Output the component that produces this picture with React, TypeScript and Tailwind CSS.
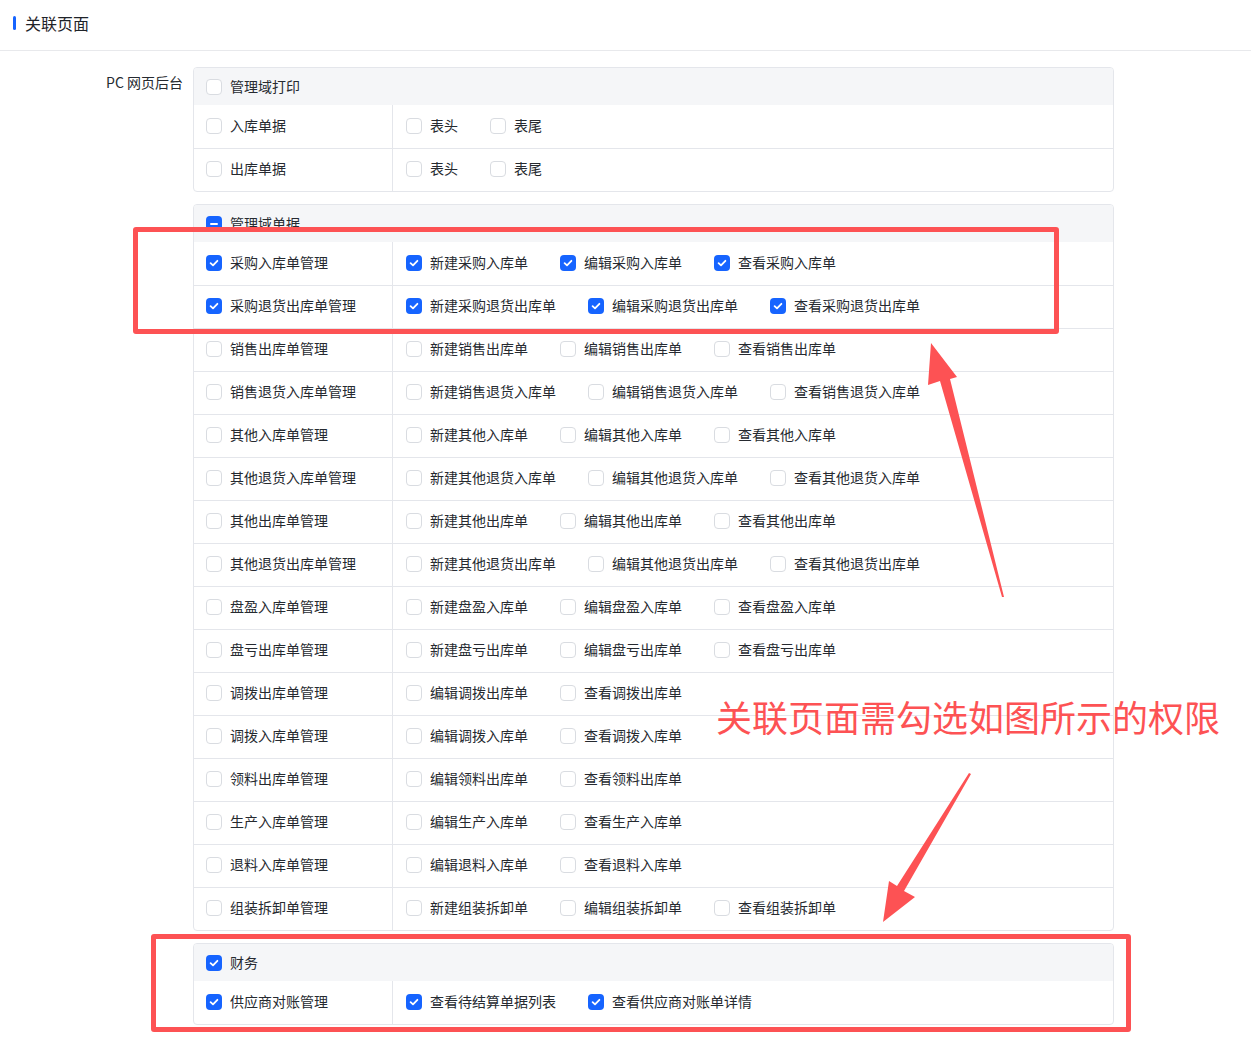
import React from 'react';

type Item = { label: string; checked?: boolean };
type Row = { label: string; checked?: boolean; items: Item[] };
type Group = { title: string; state: 'none' | 'all' | 'some'; rows: Row[] };

const c = (label: string, checked = false): Item => ({ label, checked });

const groups: Group[] = [
  {
    title: '管理域打印',
    state: 'none',
    rows: [
      { label: '入库单据', items: [c('表头'), c('表尾')] },
      { label: '出库单据', items: [c('表头'), c('表尾')] },
    ],
  },
  {
    title: '管理域单据',
    state: 'some',
    rows: [
      { label: '采购入库单管理', checked: true, items: [c('新建采购入库单', true), c('编辑采购入库单', true), c('查看采购入库单', true)] },
      { label: '采购退货出库单管理', checked: true, items: [c('新建采购退货出库单', true), c('编辑采购退货出库单', true), c('查看采购退货出库单', true)] },
      { label: '销售出库单管理', items: [c('新建销售出库单'), c('编辑销售出库单'), c('查看销售出库单')] },
      { label: '销售退货入库单管理', items: [c('新建销售退货入库单'), c('编辑销售退货入库单'), c('查看销售退货入库单')] },
      { label: '其他入库单管理', items: [c('新建其他入库单'), c('编辑其他入库单'), c('查看其他入库单')] },
      { label: '其他退货入库单管理', items: [c('新建其他退货入库单'), c('编辑其他退货入库单'), c('查看其他退货入库单')] },
      { label: '其他出库单管理', items: [c('新建其他出库单'), c('编辑其他出库单'), c('查看其他出库单')] },
      { label: '其他退货出库单管理', items: [c('新建其他退货出库单'), c('编辑其他退货出库单'), c('查看其他退货出库单')] },
      { label: '盘盈入库单管理', items: [c('新建盘盈入库单'), c('编辑盘盈入库单'), c('查看盘盈入库单')] },
      { label: '盘亏出库单管理', items: [c('新建盘亏出库单'), c('编辑盘亏出库单'), c('查看盘亏出库单')] },
      { label: '调拨出库单管理', items: [c('编辑调拨出库单'), c('查看调拨出库单')] },
      { label: '调拨入库单管理', items: [c('编辑调拨入库单'), c('查看调拨入库单')] },
      { label: '领料出库单管理', items: [c('编辑领料出库单'), c('查看领料出库单')] },
      { label: '生产入库单管理', items: [c('编辑生产入库单'), c('查看生产入库单')] },
      { label: '退料入库单管理', items: [c('编辑退料入库单'), c('查看退料入库单')] },
      { label: '组装拆卸单管理', items: [c('新建组装拆卸单'), c('编辑组装拆卸单'), c('查看组装拆卸单')] },
    ],
  },
  {
    title: '财务',
    state: 'all',
    rows: [{ label: '供应商对账管理', checked: true, items: [c('查看待结算单据列表', true), c('查看供应商对账单详情', true)] }],
  },
];

function Box({ state }: { state: 'none' | 'all' | 'some' }) {
  if (state === 'none') {
    return <span className="w-4 h-4 shrink-0 rounded-[4px] border border-[#d9dce1] bg-white" />;
  }
  return (
    <span className="w-4 h-4 shrink-0 rounded-[4px] bg-[#1664ff] flex items-center justify-center">
      {state === 'all' ? (
        <svg width="10" height="10" viewBox="0 0 10 10">
          <path d="M1.6 5.2 L4 7.4 L8.4 2.8" stroke="white" strokeWidth="1.8" fill="none" strokeLinecap="round" strokeLinejoin="round" />
        </svg>
      ) : (
        <span className="w-2 h-[2px] bg-white rounded-sm" />
      )}
    </span>
  );
}

function Check({ label, checked }: { label: string; checked?: boolean }) {
  return (
    <label className="flex items-center gap-2 whitespace-nowrap">
      <Box state={checked ? 'all' : 'none'} />
      <span className="leading-5 -mt-[2px]">{label}</span>
    </label>
  );
}

function Panel({ g }: { g: Group }) {
  return (
    <div className="border border-[#e4e6eb] rounded-[4px] overflow-hidden">
      <div className="h-[37px] bg-[#f5f6f8] flex items-center px-3">
        <label className="flex items-center gap-2">
          <Box state={g.state} />
          <span className="leading-5 -mt-[2px]">{g.title}</span>
        </label>
      </div>
      {g.rows.map((r, i) => (
        <div key={r.label} className={`flex h-[43px] ${i > 0 ? 'border-t border-[#e4e6eb]' : ''}`}>
          <div className="w-[199px] shrink-0 flex items-center px-3 pb-[2px] border-r border-[#e4e6eb]">
            <Check label={r.label} checked={r.checked} />
          </div>
          <div className="flex items-center gap-8 pl-[13px] pr-3 pb-[2px]">
            {r.items.map((it, j) => (
              <Check key={j} label={it.label} checked={it.checked} />
            ))}
          </div>
        </div>
      ))}
    </div>
  );
}

export default function App() {
  return (
    <div
      className="relative w-[1251px] h-[1056px] bg-white text-[#262a30] text-[14px] overflow-hidden"
      style={{ fontFamily: '"Noto Sans CJK SC", "Noto Sans", sans-serif' }}
    >
      <div className="h-[51px] flex items-center pl-[13px] pb-[4px] gap-[9px] border-b border-[#e8e9ec]">
        <span className="w-[3px] h-[14px] bg-[#1664ff] rounded-sm" />
        <span className="text-[16px] leading-6 text-[#1f2329]">关联页面</span>
      </div>

      <div className="flex pt-4">
        <div className="w-[183px] shrink-0 text-right pt-[5px]">PC 网页后台</div>
        <div className="ml-[10px] w-[921px] flex flex-col gap-3">
          {groups.map((g) => (
            <Panel key={g.title} g={g} />
          ))}
        </div>
      </div>

      {/* annotations */}
      <div className="absolute left-[133px] top-[227px] w-[926px] h-[107px] border-[5px] border-[#fd5254] rounded-[3px]" />
      <div className="absolute left-[151px] top-[934px] w-[980px] h-[98px] border-[5px] border-[#fd5254] rounded-[3px]" />
      <div className="absolute left-[716px] top-[692px] text-[36px] leading-[48px] text-[#fd5254] whitespace-nowrap">
        关联页面需勾选如图所示的权限
      </div>
      <svg className="absolute left-0 top-0 pointer-events-none" width="1251" height="1056">
        <polygon points="931,343 928,385 940,381 1002,597 1004,597 950,379 957,377" fill="#fd5254" />
        <polygon points="883,922 915,897 904,891 971,774 969,773 897,886 889,881" fill="#fd5254" />
      </svg>
    </div>
  );
}
